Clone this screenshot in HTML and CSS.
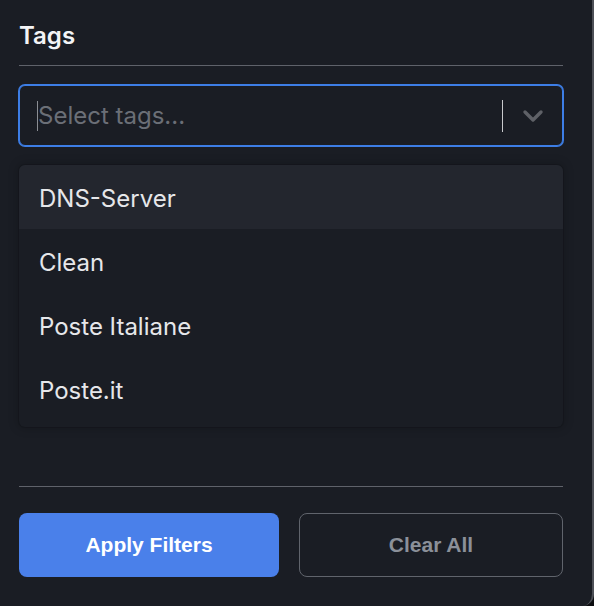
FILE: index.html
```html
<!DOCTYPE html>
<html lang="en">
<head>
<meta charset="utf-8">
<title>Tags filter</title>
<link rel="stylesheet" href="styles.css">
</head>
<body>
<div class="panel">
  <div class="header"><h2 class="title">Tags</h2></div>
  <div class="select">
    <div class="value">
      <span class="caret"></span>
      <span class="placeholder">Select tags...</span>
    </div>
    <div class="indicators">
      <span class="indicator-sep"></span>
      <span class="chevron">
        <svg width="22" height="14" viewBox="0 0 22 14"><path d="M3 3 L11 11 L19 3" fill="none" stroke="#5f6167" stroke-width="3.4" stroke-linecap="round" stroke-linejoin="round"/></svg>
      </span>
    </div>
  </div>
  <div class="menu">
    <div class="option focused">DNS-Server</div>
    <div class="option">Clean</div>
    <div class="option">Poste Italiane</div>
    <div class="option">Poste.it</div>
  </div>
  <div class="footer">
    <button class="btn primary">Apply Filters</button>
    <button class="btn outline">Clear All</button>
  </div>
</div>
</body>
</html>
```

FILE: styles.css
```css
* { box-sizing: border-box; }
html, body { margin: 0; padding: 0; }
body {
  background: #0c0d10;
  width: 594px;
  height: 606px;
  overflow: hidden;
  font-family: Inter, "Noto Sans", sans-serif;
}
.panel {
  width: 594px;
  height: 606px;
  background: #1a1d24;
  border-right: 2px solid #4d5057;
  border-bottom-right-radius: 12px;
  padding: 21px 29px 0 19px;
}
.header {
  padding-bottom: 14px;
  border-bottom: 1px solid #5f626a;
}
.title {
  margin: 0;
  font-size: 24px;
  line-height: 30px;
  font-weight: 600;
  color: #f3f4f6;
}
.select {
  margin-top: 19px;
  height: 61px;
  border: 1px solid #3d7ee6;
  box-shadow: 0 0 0 1px #3d7ee6;
  border-radius: 6px;
  display: flex;
  align-items: center;
  background: #1a1d24;
}
.value {
  flex: 1;
  display: flex;
  align-items: center;
  padding-left: 17px;
  position: relative;
}
.caret {
  position: absolute;
  left: 17px;
  top: 1px;
  width: 1px;
  height: 30px;
  background: #8a8d93;
}
.placeholder {
  font-size: 24px;
  line-height: 32px;
  color: #6b6f77;
  padding-left: 1px;
}
.indicators {
  display: flex;
  align-items: center;
  height: 100%;
}
.indicator-sep {
  width: 1px;
  height: 32px;
  background: #c9cacd;
}
.chevron {
  width: 59px;
  display: flex;
  justify-content: center;
  align-items: center;
  padding-top: 1px;
}
.chevron svg { display: block; }
.menu {
  margin-top: 19px;
  background: #1a1d24;
  border-radius: 6px;
  padding-bottom: 6px;
  box-shadow: 0 0 0 1px rgba(0,0,0,0.12), 0 0 10px 2px rgba(0,0,0,0.18);
  overflow: hidden;
}
.option {
  height: 64px;
  line-height: 64px;
  padding: 2px 20px 0;
  font-size: 24px;
  color: #e6e7ea;
}
.option.focused { background: #23262e; }
.footer {
  margin-top: 59px;
  border-top: 1px solid #5f626a;
  padding-top: 26px;
  display: grid;
  grid-template-columns: 260px 1fr;
  column-gap: 20px;
}
.btn {
  height: 64px;
  border-radius: 8px;
  font-family: "Liberation Sans", Arial, sans-serif;
  font-weight: 700;
  font-size: 21px;
  cursor: pointer;
}
.primary {
  background: #4a80ea;
  border: none;
  color: #ffffff;
}
.outline {
  background: transparent;
  border: 1px solid #60646c;
  color: #8b9099;
}
```
